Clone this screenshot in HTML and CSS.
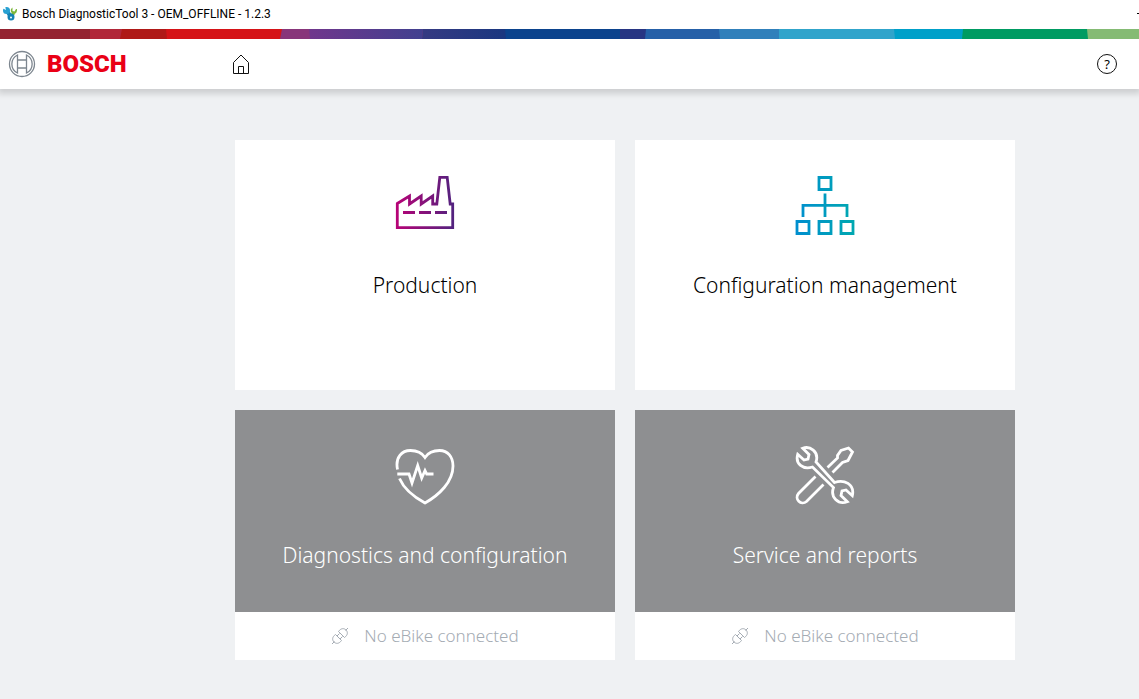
FILE: index.html
```html
<!DOCTYPE html>
<html lang="en">
<head>
    <meta charset="UTF-8">
    <meta name="viewport" content="width=device-width, initial-scale=1.0">
    <title>Bosch DiagnosticTool 3 - OEM_OFFLINE - 1.2.3</title>
    <link rel="stylesheet" href="styles.css">
</head>
<body>
    <div class="titlebar">
        <svg class="app-icon" width="16" height="16" viewBox="0 0 16 16">
            <path d="M9 10 L12 7" stroke="#7cb63a" stroke-width="3"/>
            <path d="M10.5 1.5 L10.5 5 L12.5 5.5 L14 3 L15 3 Q15.5 8 11 8 Q8 6 9 3 Z" fill="#7cb63a"/>
            <path d="M5 5 L9 11" stroke="#1583b5" stroke-width="4"/>
            <circle cx="4.5" cy="4.5" r="3.5" fill="#27a0d2"/>
            <path d="M0 2 L4 4 L3 0 Z" fill="#fff"/>
            <circle cx="9" cy="11" r="3.5" fill="#1583b5"/>
            <circle cx="9" cy="11.5" r="1" fill="#fff"/>
        </svg>
        <span class="titlebar-text">Bosch DiagnosticTool 3 - OEM_OFFLINE - 1.2.3</span>
        <span class="minimize"></span>
    </div>

    <svg class="supergraphic" viewBox="0 0 1139 10" preserveAspectRatio="none">
        <defs>
            <linearGradient id="violet"><stop offset="0" stop-color="#70368c"/><stop offset="1" stop-color="#41408f"/></linearGradient>
            <linearGradient id="navy"><stop offset="0" stop-color="#353a82"/><stop offset="1" stop-color="#1a3780"/></linearGradient>
        </defs>
        <rect width="1139" height="10" fill="#942331"/>
        <path d="M90 0H1139V10H90Z" fill="#b12739"/>
        <path d="M122 0H1139V10H120Z" fill="#af1917"/>
        <path d="M166 0H1139V10H167Z" fill="#d51317"/>
        <path d="M282 0H1139V10H280Z" fill="#88357a"/>
        <path d="M309 0H423L422 10H310Z" fill="url(#violet)"/>
        <path d="M423 0H506V10H422Z" fill="url(#navy)"/>
        <path d="M505 0H1139V10H506Z" fill="#0b438d"/>
        <path d="M620 0H1139V10H620Z" fill="#273583"/>
        <path d="M646 0H1139V10H645Z" fill="#2560a8"/>
        <path d="M719 0H1139V10H720Z" fill="#3080bb"/>
        <path d="M779 0H1139V10H779Z" fill="#30a4cb"/>
        <path d="M894 0H1139V10H895Z" fill="#00a0c9"/>
        <path d="M963 0H1139V10H962Z" fill="#009b62"/>
        <path d="M1087 0H1139V10H1088Z" fill="#85bb74"/>
    </svg>

    <header class="header">
        <div class="brand">
            <svg width="28" height="28" viewBox="0 0 28 28" fill="none" stroke="#7d868f" stroke-width="1.3">
                <circle cx="14" cy="14" r="12.5"/>
                <path d="M9.5 5 A10 10 0 0 0 9.5 23 Z M18.5 5 A10 10 0 0 1 18.5 23 Z"/>
                <path d="M9.5 10H18.5 M9.5 18H18.5"/>
            </svg>
            <span class="brand-name">BOSCH</span>
        </div>
        <a class="home" href="#" aria-label="Home">
            <svg width="18" height="20" viewBox="0 0 18 20" fill="none" stroke="#111">
                <path d="M1.5 8.5 L9 1 L16.5 8.5 V19.5 H1.5 Z"/>
                <path d="M6.5 19.5 V12.5 H11.5 V19.5"/>
            </svg>
        </a>
        <button class="help" type="button" aria-label="Help">?</button>
    </header>

    <main class="tiles">
        <div class="card">
            <button class="tile" type="button">
                <svg width="60" height="60" viewBox="0 0 60 60" fill="none" stroke="url(#factory)" stroke-width="2.8">
                    <defs>
                        <linearGradient id="factory" gradientUnits="userSpaceOnUse" x1="0" y1="30" x2="60" y2="30">
                            <stop offset="0" stop-color="#b90276"/><stop offset="1" stop-color="#50237f"/>
                        </linearGradient>
                    </defs>
                    <path d="M2.3 28.5 L14.5 21 V29 L26.2 21 V29 L37.7 21 V29 H41.8 L44.8 2.4 H52.2 L55.2 29 H57.7 V52.7 H2.3 Z"/>
                    <path d="M8 37.5H20 M24 37.5H36 M40 37.5H52"/>
                </svg>
                <span class="tile-title">Production</span>
            </button>
        </div>
        <div class="card">
            <button class="tile" type="button">
                <svg width="60" height="60" viewBox="0 0 60 60" fill="none" stroke="url(#tree)" stroke-width="2.8">
                    <defs>
                        <linearGradient id="tree" gradientUnits="userSpaceOnUse" x1="0" y1="30" x2="60" y2="30">
                            <stop offset="0" stop-color="#008ecf"/><stop offset="1" stop-color="#00a8b0"/>
                        </linearGradient>
                    </defs>
                    <path d="M24 2.5H36V14.5H24Z M2 46.5H14V58.5H2Z M24 46.5H36V58.5H24Z M46 46.5H58V58.5H46Z"/>
                    <path d="M30 18.5V42 M8 42V30.3H52V42"/>
                </svg>
                <span class="tile-title">Configuration management</span>
            </button>
        </div>
        <div class="card">
            <button class="tile" type="button" disabled>
                <svg width="60" height="60" viewBox="0 0 60 60" fill="none" stroke="#fff" stroke-width="2.8">
                    <path d="M2.5 24.5 C0 12 7 5.5 15.5 5.5 C22 5.5 27 8 30 12.5 C33 8 38 5.5 44.5 5.5 C53 5.5 58 12 58 21 C58 37 44 50 30 58 C19 52 9 44 4.5 33.5"/>
                    <path d="M2.3 29 H14 L17 38 L22.7 20.5 L26.7 33 L30 25.5 L31.7 29 H38.5"/>
                </svg>
                <span class="tile-title">Diagnostics and configuration</span>
            </button>
            <div class="status">
                <svg width="18" height="18" viewBox="0 0 18 18" fill="none" stroke="#a4abb3">
                    <path d="M7.5 4.5 L13.5 10.5 C17 8 17 5 15 3 C13 1 10 1 7.5 4.5 Z M14.5 3.5 L17 1"/>
                    <path d="M4.5 7.5 L10.5 13.5 C8 17 5 17 3 15 C1 13 1 10 4.5 7.5 Z M3.5 14.5 L1 17 M6 9 L8.5 6.5 M9 12 L11.5 9.5"/>
                </svg>
                <span>No eBike connected</span>
            </div>
        </div>
        <div class="card">
            <button class="tile" type="button" disabled>
                <svg width="60" height="60" viewBox="0 0 60 60" fill="none" stroke="#fff" stroke-width="2.8">
                    <path d="M7.7 3.3 C14.5 0.5 24.5 6.5 21 17 L39.5 37.5 C49 34 60 39 57.3 50.7 L51 45 L47 46 L46 50.5 L52.3 56.7 C43 60 35 52 38.5 42.5 L17.5 22 C8 25 0 19 2.7 9.3 L9 15 L13 14 L14 9.5 Z"/>
                    <path d="M20.5 31.5 L3.5 48.5 C-1 54 6 61 11.5 56.5 L28.5 39.5"/>
                    <path d="M32.5 22.5 L42.5 13 V10.5 L46 5.5 L53.5 3 L57.5 7 L53 15.5 L47.5 17.5 L37.5 27.5"/>
                </svg>
                <span class="tile-title">Service and reports</span>
            </button>
            <div class="status">
                <svg width="18" height="18" viewBox="0 0 18 18" fill="none" stroke="#a4abb3">
                    <path d="M7.5 4.5 L13.5 10.5 C17 8 17 5 15 3 C13 1 10 1 7.5 4.5 Z M14.5 3.5 L17 1"/>
                    <path d="M4.5 7.5 L10.5 13.5 C8 17 5 17 3 15 C1 13 1 10 4.5 7.5 Z M3.5 14.5 L1 17 M6 9 L8.5 6.5 M9 12 L11.5 9.5"/>
                </svg>
                <span>No eBike connected</span>
            </div>
        </div>
    </main>
</body>
</html>
```
FILE: styles.css
```css
* {
    box-sizing: border-box;
}
body {
    margin: 0;
    font-family: "Noto Sans", sans-serif;
    background-color: #eff1f3;
    color: #000;
}
svg {
    display: block;
    flex-shrink: 0;
}
.titlebar {
    display: flex;
    align-items: center;
    height: 29px;
    padding: 0 0 2px 2px;
    background: #fff;
    font-family: Roboto, sans-serif;
    font-size: 12px;
}
.titlebar-text {
    margin-left: 4px;
    line-height: 16px;
}
.minimize {
    width: 2px;
    height: 1px;
    margin-left: auto;
    background: #000;
}
.supergraphic {
    width: 100%;
    height: 10px;
}
.header {
    display: flex;
    align-items: center;
    height: 50px;
    padding: 0 22px 0 8px;
    background: #fff;
    box-shadow: 0 3px 6px 2px rgba(0,0,0,0.14);
    clip-path: inset(0 0 -16px 0);
}
.brand {
    display: flex;
    align-items: center;
    gap: 11px;
    width: 224px;
}
.brand-name {
    font-family: Roboto, sans-serif;
    font-size: 24px;
    font-weight: 900;
    line-height: 28px;
    color: #ea0016;
}
.help {
    width: 20px;
    height: 20px;
    margin-left: auto;
    padding: 0;
    border: 1px solid #111;
    border-radius: 50%;
    background: none;
    font-family: "Noto Sans", sans-serif;
    font-size: 13px;
    line-height: 18px;
    cursor: pointer;
}
.tiles {
    display: grid;
    grid-template-columns: repeat(2, minmax(0, 380px));
    gap: 20px;
    padding: 51px 20px 39px 235px;
}
.card {
    display: flex;
    flex-direction: column;
    min-height: 250px;
    background: #fff;
}
.tile {
    display: flex;
    flex: 1;
    flex-direction: column;
    align-items: center;
    gap: 35px;
    padding: 35px 20px;
    border: none;
    background: #fff;
    color: #000;
    font-family: "Noto Sans", sans-serif;
    font-size: 21px;
    font-weight: 300;
    line-height: 30px;
    cursor: pointer;
}
.tile:disabled {
    background: #8e8f91;
    color: #fff;
    cursor: default;
}
.status {
    display: flex;
    align-items: center;
    justify-content: center;
    gap: 15px;
    height: 48px;
    color: #a4abb3;
    font-size: 17px;
    font-weight: 300;
    line-height: 24px;
}
```
